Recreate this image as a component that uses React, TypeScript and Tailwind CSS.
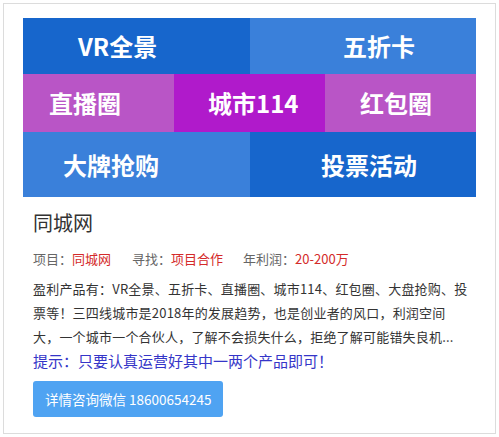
import React from "react";

const font = { fontFamily: '"Noto Sans CJK SC", "Noto Sans", sans-serif' };

export default function App() {
  return (
    <div className="w-[499px] h-[437px] bg-white p-[3px]" style={font}>
      <div className="w-[493px] h-[431px] border border-[#dcdcdc] pt-[14px] px-[19px]">
        <div className="flex flex-col w-[453px] text-white font-bold text-[24px]">
          <div className="flex h-[56px]">
            <div className="w-[227px] bg-[#1766cc] flex items-center pl-[55px]">VR全景</div>
            <div className="w-[226px] bg-[#3a80da] flex items-center pl-[93px]">五折卡</div>
          </div>
          <div className="flex h-[58px]">
            <div className="w-[151px] bg-[#b955c6] flex items-center pl-[26px]">直播圈</div>
            <div className="w-[151px] bg-[#b01acb] flex items-center pl-[34px]">城市114</div>
            <div className="w-[151px] bg-[#b955c6] flex items-center pl-[35px]">红包圈</div>
          </div>
          <div className="flex h-[65px]">
            <div className="w-[227px] bg-[#3a80da] flex items-center pl-[40px]">大牌抢购</div>
            <div className="w-[226px] bg-[#1766cc] flex items-center pl-[71px]">投票活动</div>
          </div>
        </div>
        <div className="px-[10px] pt-[11px]">
          <div className="text-[20px] leading-[30px] text-[#333]">同城网</div>
          <div className="flex text-[13px] leading-[24px] text-[#666] mt-[9px]">
            <span>项目：</span>
            <span className="text-[#d42a2a]">同城网</span>
            <span className="ml-[21px]">寻找：</span>
            <span className="text-[#d42a2a]">项目合作</span>
            <span className="ml-[20px]">年利润：</span>
            <span className="text-[#d42a2a]">20-200万</span>
          </div>
          <p className="text-[13px] leading-[24px] text-[#333] mt-[6px] tracking-[0.2px] whitespace-nowrap">
            盈利产品有：VR全景、五折卡、直播圈、城市114、红包圈、大盘抢购、投
            <br />
            票等！三四线城市是2018年的发展趋势，也是创业者的风口，利润空间
            <br />
            大，一个城市一个合伙人，了解不会损失什么，拒绝了解可能错失良机...
          </p>
          <div className="text-[15px] leading-[22px] text-[#3535c8] mt-[1px]">提示：只要认真运营好其中一两个产品即可！</div>
          <div className="mt-[9px] inline-flex items-center h-[36px] px-[12px] rounded-[3px] bg-[#4fa3f2] text-white text-[13.5px]">
            详情咨询微信 18600654245
          </div>
        </div>
      </div>
    </div>
  );
}
